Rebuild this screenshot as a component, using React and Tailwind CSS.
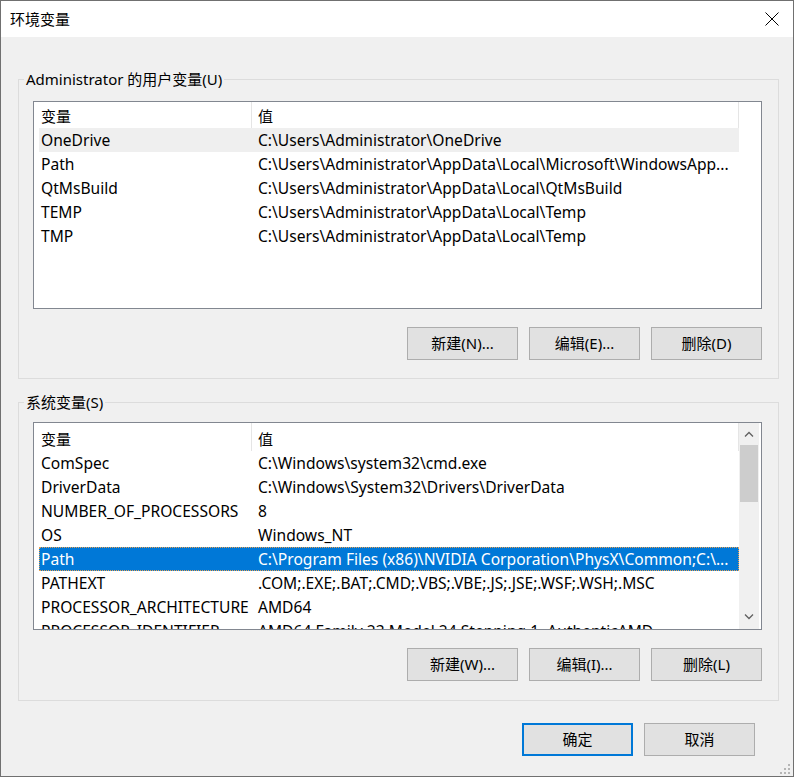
const userVars = [
  ["OneDrive", "C:\\Users\\Administrator\\OneDrive"],
  ["Path", "C:\\Users\\Administrator\\AppData\\Local\\Microsoft\\WindowsApp..."],
  ["QtMsBuild", "C:\\Users\\Administrator\\AppData\\Local\\QtMsBuild"],
  ["TEMP", "C:\\Users\\Administrator\\AppData\\Local\\Temp"],
  ["TMP", "C:\\Users\\Administrator\\AppData\\Local\\Temp"],
];

const sysVars = [
  ["ComSpec", "C:\\Windows\\system32\\cmd.exe"],
  ["DriverData", "C:\\Windows\\System32\\Drivers\\DriverData"],
  ["NUMBER_OF_PROCESSORS", "8"],
  ["OS", "Windows_NT"],
  ["Path", "C:\\Program Files (x86)\\NVIDIA Corporation\\PhysX\\Common;C:\\..."],
  ["PATHEXT", ".COM;.EXE;.BAT;.CMD;.VBS;.VBE;.JS;.JSE;.WSF;.WSH;.MSC"],
  ["PROCESSOR_ARCHITECTURE", "AMD64"],
  ["PROCESSOR_IDENTIFIER", "AMD64 Family 23 Model 24 Stepping 1, AuthenticAMD"],
];

const Btn = ({ children, primary }) => (
  <button
    className={`h-[33px] w-[111px] bg-[#e1e1e1] text-[15px] leading-none text-black ${
      primary ? "border-2 border-[#0078d7]" : "border border-[#adadad]"
    }`}
  >
    {children}
  </button>
);

const Header = ({ h, pt }) => (
  <div className={`flex items-center ${h}`}>
    <div className={`w-[217px] pl-[7px] ${pt}`}>变量</div>
    <div className="h-full w-px bg-[#e5e5e5]" />
    <div className={`w-[486px] pl-[6px] ${pt}`}>值</div>
    <div className="h-full w-px bg-[#e5e5e5]" />
  </div>
);

const Row = ({ name, value, hover, selected }) => (
  <div
    className={`ml-[5px] flex h-[24px] w-[700px] items-center whitespace-nowrap pt-[2px] text-[15.6px] ${
      selected
        ? "bg-[#0078d7] text-white outline outline-1 -outline-offset-1 outline-dotted outline-[#e8a050]"
        : hover
        ? "bg-[#efefef]"
        : ""
    }`}
  >
    <div className="w-[212px] overflow-hidden pl-[2px]">{name}</div>
    <div className="flex-1 overflow-hidden pl-[7px]">{value}</div>
  </div>
);

const Chevron = ({ up }) => (
  <svg width="10" height="6" viewBox="0 0 10 6">
    <path
      d={up ? "M1 5.5 L5 1.5 L9 5.5" : "M1 0.5 L5 4.5 L9 0.5"}
      fill="none"
      stroke="#606060"
      strokeWidth="1.3"
    />
  </svg>
);

const GroupBox = ({ label, pt, pb, children }) => (
  <fieldset className={`ml-[17px] w-[761px] border border-[#dcdcdc] px-0 ${pb}`}>
    <legend className="ml-[5px] px-[2px] leading-[20px]">{label}</legend>
    <div className={`pl-[14px] pr-[16px] ${pt}`}>{children}</div>
  </fieldset>
);

export default function App() {
  return (
    <div className="relative h-[777px] w-[794px] overflow-hidden border border-[#707070] bg-[#f0f0f0] font-['Noto_Sans','Noto_Sans_CJK_SC',sans-serif] text-[15px] text-black">
      <div className="flex h-[36px] items-center justify-between bg-white pl-[9px] pr-[14px]">
        <span className="pt-[1px]">环境变量</span>
        <svg width="14" height="14" viewBox="0 0 14 14">
          <path d="M0.5 0.5 L13.5 13.5 M13.5 0.5 L0.5 13.5" stroke="#000" strokeWidth="1" />
        </svg>
      </div>

      <div className="mt-[32px]">
        <GroupBox label="Administrator 的用户变量(U)" pt="pt-[12px]" pb="pb-[18px]">
          <div className="h-[208px] w-[729px] overflow-hidden border border-[#828790] bg-white">
            <Header h="h-[26px]" pt="pt-[3px]" />
            {userVars.map(([n, v], i) => (
              <Row key={n} name={n} value={v} hover={i === 0} />
            ))}
          </div>
          <div className="mt-[18px] flex justify-end gap-[11px]">
            <Btn>新建(N)...</Btn>
            <Btn>编辑(E)...</Btn>
            <Btn>删除(D)</Btn>
          </div>
        </GroupBox>
      </div>

      <div className="mt-[13px]">
        <GroupBox label="系统变量(S)" pt="pt-[10px]" pb="pb-[19px]">
          <div className="flex h-[208px] w-[729px] overflow-hidden border border-[#828790] bg-white">
            <div className="w-[705px] overflow-hidden">
              <Header h="h-[28px]" pt="pt-[4px]" />
              {sysVars.map(([n, v]) => (
                <Row key={n} name={n} value={v} selected={n === "Path"} />
              ))}
            </div>
            <div className="flex w-[20px] flex-col bg-[#f0f0f0]">
              <div className="flex h-[22px] items-center justify-center">
                <Chevron up />
              </div>
              <div className="mx-[1px] h-[57px] bg-[#cdcdcd]" />
              <div className="flex-1" />
              <div className="flex h-[24px] items-center justify-center">
                <Chevron />
              </div>
            </div>
          </div>
          <div className="mt-[18px] flex justify-end gap-[11px]">
            <Btn>新建(W)...</Btn>
            <Btn>编辑(I)...</Btn>
            <Btn>删除(L)</Btn>
          </div>
        </GroupBox>
      </div>

      <div className="mt-[22px] flex justify-end gap-[11px] pr-[38px]">
        <Btn primary>确定</Btn>
        <Btn>取消</Btn>
      </div>

      <div className="absolute bottom-[2px] right-[3px] grid grid-cols-3 gap-[2px]">
        <span className="h-[2px] w-[2px]" />
        <span className="h-[2px] w-[2px]" />
        <span className="h-[2px] w-[2px] bg-[#b5b5b5]" />
        <span className="h-[2px] w-[2px]" />
        <span className="h-[2px] w-[2px] bg-[#b5b5b5]" />
        <span className="h-[2px] w-[2px] bg-[#b5b5b5]" />
        <span className="h-[2px] w-[2px] bg-[#b5b5b5]" />
        <span className="h-[2px] w-[2px] bg-[#b5b5b5]" />
        <span className="h-[2px] w-[2px] bg-[#b5b5b5]" />
      </div>
    </div>
  );
}
